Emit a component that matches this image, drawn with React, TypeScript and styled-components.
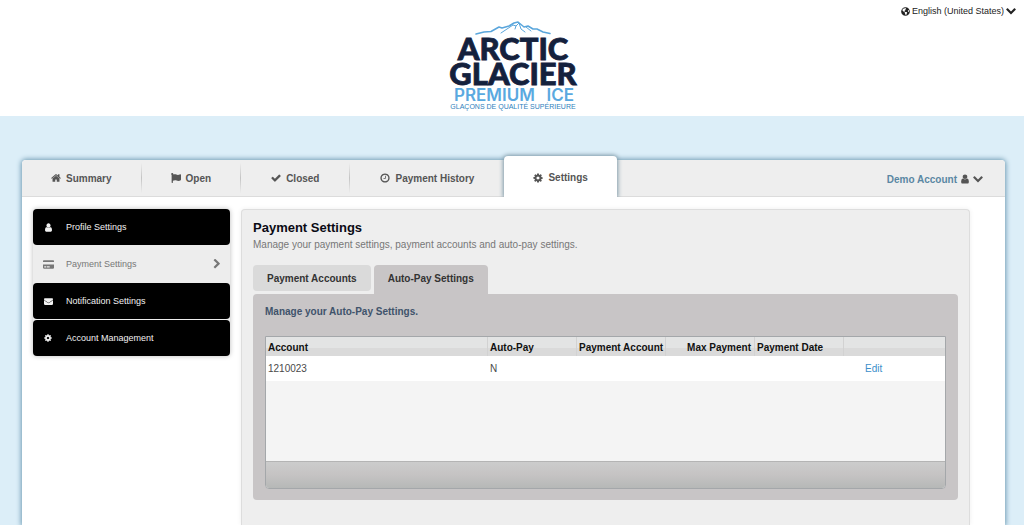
import React from "react";
import styled, { createGlobalStyle, css } from "styled-components";
import { FaCreditCard, FaEnvelope, FaFlag, FaGlobeAmericas } from "react-icons/fa";

const GlobalStyle = createGlobalStyle`
  *, *::before, *::after { box-sizing: border-box; }
  body {
    margin: 0;
    background: #dceef8;
    font-family: "Liberation Sans", Arial, sans-serif;
    font-size: 10px;
    color: #4a4a4a;
  }
  a { color: inherit; text-decoration: none; }
  button { font: inherit; color: inherit; border: 0; background: none; padding: 0; cursor: pointer; }
  svg { display: block; flex: none; }
`;

const Page = styled.div`
  display: flex;
  flex-direction: column;
  min-height: 100vh;
`;

const Header = styled.header`
  position: relative;
  display: flex;
  justify-content: center;
  height: 116px;
  padding-top: 18px;
  background: #fff;
`;

const LanguageButton = styled.button`
  position: absolute;
  top: 6px;
  right: 8px;
  display: flex;
  align-items: center;
  gap: 2px;
  && { font-size: 9px; color: #222; }
`;

const Card = styled.main`
  flex: 1;
  display: flex;
  flex-direction: column;
  margin: 44px 19px 0 22px;
  background: #fff;
  border-radius: 4px 4px 0 0;
  box-shadow: 0 0 5px 1px #6f9bb3;
`;

const TopBar = styled.div`
  display: flex;
  justify-content: space-between;
  height: 37px;
  background: #eee;
  border-bottom: 1px solid #dcdcdc;
  border-radius: 4px 4px 0 0;
`;

const TabList = styled.nav`
  display: flex;
`;

const TabLink = styled.a<{ $active?: boolean; $divider?: boolean; $wide?: boolean }>`
  display: flex;
  align-items: center;
  gap: 5px;
  padding: 0 ${(p) => (p.$wide ? 30 : 29)}px;
  font-weight: bold;
  color: #555;
  ${(p) =>
    p.$divider &&
    css`
      border-right: 1px solid;
      border-image: linear-gradient(#eee 10%, #c4c4c4 50%, #eee 90%) 1;
    `}
  ${(p) =>
    p.$active &&
    css`
      height: 41px;
      margin-top: -4px;
      padding-top: 2px;
      background: #fff;
      border-radius: 4px 4px 0 0;
      box-shadow: 0 0 4px 1px #7f9aa8;
      clip-path: inset(-6px -6px 0 -6px);
    `}
`;

const AccountButton = styled.button`
  display: flex;
  align-items: center;
  gap: 3px;
  margin-right: 22px;
  padding-top: 2px;
  && { font-weight: bold; color: #555; }
`;

const AccountName = styled.span`
  color: #5a87a3;
`;

const Body = styled.div`
  flex: 1;
  display: flex;
  align-items: stretch;
  gap: 11px;
  padding: 12px 35px 0 11px;
`;

const SideMenu = styled.nav`
  flex: 0 0 197px;
  align-self: flex-start;
  display: flex;
  flex-direction: column;
  gap: 1px;
  border-radius: 4px;
  background: #ededed;
  box-shadow: 0 0 5px #bbb;
`;

const SideLink = styled.a<{ $active?: boolean }>`
  display: flex;
  align-items: center;
  height: 36px;
  padding: 0 8px 0 9px;
  border-radius: 4px;
  font-size: 9px;
  color: ${(p) => (p.$active ? "#777" : "#f2f2f2")};
  background: ${(p) => (p.$active ? "#ededed" : "#000")};
`;

const SideIcon = styled.span`
  display: flex;
  justify-content: center;
  width: 12px;
  margin-right: 12px;
`;

const SideLabel = styled.span`
  flex: 1;
`;

const Panel = styled.section`
  flex: 1;
  min-width: 0;
  padding: 10px 11px 0;
  background: #eee;
  border: 1px solid #ddd;
  border-bottom: 0;
  border-radius: 4px 4px 0 0;
  box-shadow: 0 0 5px #eee;
`;

const Title = styled.h1`
  margin: 0;
  font-size: 13px;
  line-height: 16px;
  color: #0a0a14;
`;

const Description = styled.p`
  margin: 2px 0 13px;
  line-height: 14px;
  color: #777;
`;

const SubTabs = styled.div`
  display: flex;
  align-items: flex-start;
  gap: 3px;
`;

const SubTab = styled.button<{ $active?: boolean }>`
  && {
    height: ${(p) => (p.$active ? 29 : 26)}px;
    padding: 0 14px ${(p) => (p.$active ? 3 : 0)}px;
    font-weight: bold;
    color: #333;
    background: ${(p) => (p.$active ? "#c8c5c6" : "#dadada")};
    border-radius: ${(p) => (p.$active ? "4px 4px 0 0" : "4px")};
  }
`;

const AutoPay = styled.div`
  padding: 11px 12px;
  background: #c8c5c6;
  border-radius: 4px;
`;

const Lead = styled.p`
  margin: 0 0 18px;
  line-height: 13px;
  font-weight: bold;
  color: #40536b;
`;

const Grid = styled.div`
  border: 1px solid #a4a7aa;
  border-radius: 0 0 4px 4px;
  background: #f4f4f4;
`;

const GridTable = styled.table`
  width: 100%;
  table-layout: fixed;
  border-collapse: separate;
  border-spacing: 0;
`;

const Col = styled.col<{ $w?: number }>`
  width: ${(p) => (p.$w ? `${p.$w}px` : "auto")};
`;

const HeadCell = styled.th<{ $right?: boolean }>`
  height: 19px;
  padding: 2px 3px 0 2px;
  text-align: ${(p) => (p.$right ? "right" : "left")};
  white-space: nowrap;
  color: #111;
  background: linear-gradient(#e3e4e4 0 60%, #dadada 60%);
  border-right: 1px solid #d2d2d2;
  &:last-child { border-right: 0; }
`;

const Cell = styled.td<{ $action?: boolean }>`
  height: 25px;
  padding: 0 3px 0 ${(p) => (p.$action ? 21 : 2)}px;
  background: #fff;
`;

const EditLink = styled.a`
  color: #3b8fca;
`;

const GridSpace = styled.div`
  height: 80px;
`;

const GridFooter = styled.div`
  height: 27px;
  border-top: 1px solid #b4b4b4;
  border-radius: 0 0 3px 3px;
  background: linear-gradient(#cccccc, #c5c3c3 50%, #b6b8b7);
`;

const LogoText = styled.text<{ $size: number; $family: string; $weight: number; $anchor?: string }>`
  font-family: ${(p) => p.$family}, sans-serif;
  font-size: ${(p) => p.$size}px;
  font-weight: ${(p) => p.$weight};
  text-anchor: ${(p) => p.$anchor ?? "middle"};
`;

function Logo() {
  return (
    <svg width="140" height="96" viewBox="0 0 140 96" role="img" aria-label="Arctic Glacier Premium Ice">
      <g fill="none" stroke="#5aa6dc" strokeLinecap="round" strokeLinejoin="round">
        <path strokeWidth="1.5" d="M34 16 42 14 49 13.500 57 9 60 10 67 8 72 5 76 4 82 9 86 8 91 11 95 11 101 14 108 15.500" />
        <path strokeWidth="1" d="M59 15 65 11 71 7 74 8 77 5 79 11 83 14M74 8 73 11M84 9 89 13" />
      </g>
      <g fill="#14213d" stroke="#14213d" strokeWidth="0.8">
        <LogoText x="71" y="42" $size={31} $family="Lato" $weight={900}>ARCTIC</LogoText>
        <LogoText x="71" y="67" $size={31} $family="Lato" $weight={900}>GLACIER</LogoText>
      </g>
      <g fill="#5aa9e0">
        <LogoText x="12" y="83" $size={17} $family="Inter" $weight={600} $anchor="start">PREMIUM</LogoText>
        <LogoText x="132" y="83" $size={17} $family="Inter" $weight={600} $anchor="end">ICE</LogoText>
      </g>
      <g fill="#2f7fbd">
        <LogoText x="71" y="91" $size={7} $family="'Liberation Sans'" $weight={400}>GLAÇONS DE QUALITÉ SUPÉRIEURE</LogoText>
      </g>
    </svg>
  );
}

type IconProps = { size: number };

function glyph(d: string, box = "64 64 1664 1664") {
  return function Glyph({ size }: IconProps) {
    return (
      <svg width={size} height={size} viewBox={box} fill="currentColor" aria-hidden="true">
        <path d={d} />
      </svg>
    );
  };
}

const ChevronDown = glyph(
  "M1683 808l-742 741q-19 19-45 19t-45-19l-742-741q-19-19-19-45.500t19-45.500l166-165q19-19 45-19t45 19l531 531 531-531q19-19 45-19t45 19l166 165q19 19 19 45.500t-19 45.500z",
  "64 164 1664 1664"
);
const ChevronRight = glyph(
  "M1363 877l-742 742q-19 19-45 19t-45-19l-166-166q-19-19-19-45t19-45l531-531-531-531q-19-19-19-45t19-45l166-166q19-19 45-19t45 19l742 742q19 19 19 45t-19 45z"
);
const User = glyph(
  "M1536 1399q0 109-62.500 187t-150.500 78h-854q-88 0-150.500-78t-62.500-187q0-85 8.500-160.500t31.500-152 58.500-131 94-89 134.500-34.500q131 128 313 128t313-128q76 0 134.500 34.500t94 89 58.500 131 31.500 152 8.500 160.500zm-256-887q0 159-112.500 271.500t-271.500 112.500-271.500-112.500-112.500-271.500 112.500-271.500 271.500-112.500 271.500 112.500 112.500 271.500z"
);
const Home = glyph(
  "M1472 992v480q0 26-19 45t-45 19h-384v-384h-256v384h-384q-26 0-45-19t-19-45v-480q0-1 .5-3t.5-3l575-474 575 474q1 2 1 6zm223-69l-62 74q-8 9-21 11h-3q-13 0-21-7l-692-577-692 577q-12 8-24 7-13-2-21-11l-62-74q-8-10-7-23.500t11-21.500l719-599q32-26 76-26t76 26l244 204v-195q0-14 9-23t23-9h192q14 0 23 9t9 23v408l219 182q10 8 11 21.500t-7 23.500z"
);
const Clock = glyph(
  "M1024 544v448q0 14-9 23t-23 9h-320q-14 0-23-9t-9-23v-64q0-14 9-23t23-9h224v-352q0-14 9-23t23-9h64q14 0 23 9t9 23zm416 352q0-148-73-273t-198-198-273-73-273 73-198 198-73 273 73 273 198 198 273 73 273-73 198-198 73-273zm224 0q0 209-103 385.500t-279.500 279.500-385.500 103-385.500-103-279.500-279.500-103-385.500 103-385.500 279.500-279.500 385.500-103 385.500 103 279.500 279.500 103 385.500z"
);
const Check = glyph(
  "M1671 566q0 40-28 68l-724 724-136 136q-28 28-68 28t-68-28l-136-136-362-362q-28-28-28-68t28-68l136-136q28-28 68-28t68 28l294 295 656-657q28-28 68-28t68 28l136 136q28 28 28 68z"
);
const Cog = glyph(
  "M1152 896q0-106-75-181t-181-75-181 75-75 181 75 181 181 75 181-75 75-181zm512-109v222q0 12-8 23t-20 13l-185 28q-19 54-39 91 35 50 107 138 10 12 10 25t-9 23q-27 37-99 108t-94 71q-12 0-26-9l-138-108q-44 23-91 38-16 136-29 186-7 28-36 28h-222q-14 0-24.500-8.500t-11.500-21.500l-28-184q-49-16-90-37l-141 107q-10 9-25 9-14 0-25-11-126-114-165-168-7-10-7-23 0-12 8-23 15-21 51-66.500t54-70.500q-27-50-41-99l-183-27q-13-2-21-12.500t-8-23.500v-222q0-12 8-23t19-13l186-28q14-46 39-92-40-57-107-138-10-12-10-24 0-10 9-23 26-36 98.500-107.500t94.500-71.500q13 0 26 10l138 107q44-23 91-38 16-136 29-186 7-28 36-28h222q14 0 24.500 8.500t11.500 21.500l28 184q49 16 90 37l142-107q9-9 24-9 13 0 25 10 129 119 165 170 7 8 7 22 0 12-8 23-15 21-51 66.500t-54 70.500q26 50 41 98l183 28q13 2 21 12.500t8 23.500z"
);

const tabs = [
  { label: "Summary", Icon: Home, divider: true },
  { label: "Open", Icon: FaFlag, divider: true },
  { label: "Closed", Icon: Check, divider: true, wide: true },
  { label: "Payment History", Icon: Clock, wide: true },
  { label: "Settings", Icon: Cog, active: true },
];

const sideItems = [
  { label: "Profile Settings", Icon: User, size: 9 },
  { label: "Payment Settings", Icon: FaCreditCard, size: 11, active: true },
  { label: "Notification Settings", Icon: FaEnvelope, size: 9 },
  { label: "Account Management", Icon: Cog, size: 8 },
];

export default function App() {
  return (
    <>
      <GlobalStyle />
      <Page>
        <Header>
          <Logo />
          <LanguageButton type="button">
            <FaGlobeAmericas size={9} />
            English (United States)
            <ChevronDown size={10} />
          </LanguageButton>
        </Header>
        <Card>
          <TopBar>
            <TabList>
              {tabs.map(({ label, Icon, divider, active, wide }) => (
                <TabLink key={label} href="#" $divider={divider} $active={active} $wide={wide}>
                  <Icon size={10} />
                  {label}
                </TabLink>
              ))}
            </TabList>
            <AccountButton type="button">
              <AccountName>Demo Account</AccountName>
              <User size={10} />
              <ChevronDown size={10} />
            </AccountButton>
          </TopBar>
          <Body>
            <SideMenu>
              {sideItems.map(({ label, Icon, size, active }) => (
                <SideLink key={label} href="#" $active={active}>
                  <SideIcon>
                    <Icon size={size} />
                  </SideIcon>
                  <SideLabel>{label}</SideLabel>
                  {active && <ChevronRight size={10} />}
                </SideLink>
              ))}
            </SideMenu>
            <Panel>
              <Title>Payment Settings</Title>
              <Description>
                Manage your payment settings, payment accounts and auto-pay settings.
              </Description>
              <SubTabs>
                <SubTab type="button">Payment Accounts</SubTab>
                <SubTab type="button" $active>
                  Auto-Pay Settings
                </SubTab>
              </SubTabs>
              <AutoPay>
                <Lead>Manage your Auto-Pay Settings.</Lead>
                <Grid>
                  <GridTable>
                    <colgroup>
                      <Col />
                      <Col $w={89} />
                      <Col $w={89} />
                      <Col $w={89} />
                      <Col $w={89} />
                      <Col $w={101} />
                    </colgroup>
                    <thead>
                      <tr>
                        <HeadCell>Account</HeadCell>
                        <HeadCell>Auto-Pay</HeadCell>
                        <HeadCell>Payment Account</HeadCell>
                        <HeadCell $right>Max Payment</HeadCell>
                        <HeadCell>Payment Date</HeadCell>
                        <HeadCell aria-label="Actions" />
                      </tr>
                    </thead>
                    <tbody>
                      <tr>
                        <Cell>1210023</Cell>
                        <Cell>N</Cell>
                        <Cell />
                        <Cell />
                        <Cell />
                        <Cell $action>
                          <EditLink href="#">Edit</EditLink>
                        </Cell>
                      </tr>
                    </tbody>
                  </GridTable>
                  <GridSpace />
                  <GridFooter />
                </Grid>
              </AutoPay>
            </Panel>
          </Body>
        </Card>
      </Page>
    </>
  );
}
